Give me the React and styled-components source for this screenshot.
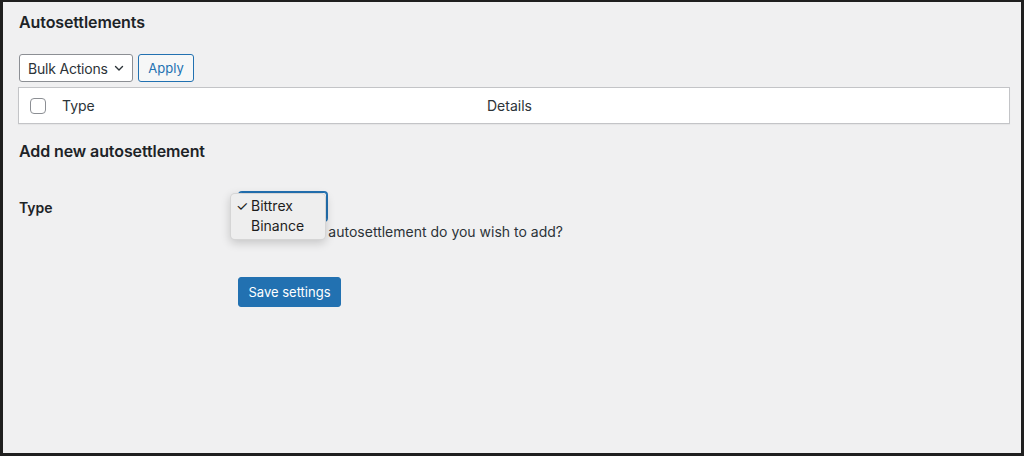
import React from "react";
import styled, { createGlobalStyle } from "styled-components";

const Global = createGlobalStyle`
  html, body { margin: 0; padding: 0; }
  body { font-family: Inter, "Liberation Sans", Arial, sans-serif; color: #1d2327; background: #f0f0f1; }
  * { box-sizing: border-box; }
`;

const Frame = styled.div`
  width: 1024px;
  height: 456px;
  border-style: solid;
  border-color: #1f1f1f;
  border-width: 2px 3px 3px 3px;
  background: #f0f0f1;
  padding: 10px 11px 0 15px;
  overflow: hidden;
`;

const Title = styled.h2`
  margin: 0 0 0 1px;
  font-size: 16px;
  font-weight: 600;
  line-height: 20px;
  color: #1d2327;
  letter-spacing: -0.1px;
`;

const TopNav = styled.div`
  display: flex;
  gap: 5px;
  margin: 22px 0 5px 1px;
`;

const BulkSelect = styled.div`
  display: flex;
  align-items: center;
  gap: 5px;
  height: 28px;
  width: 114px;
  padding: 0 0 0 8px;
  border: 1px solid #8c8f94;
  border-radius: 3px;
  background: #fff;
  font-size: 14px;
  color: #2c3338;
  letter-spacing: -0.2px;
  white-space: nowrap;
`;

const ApplyButton = styled.button`
  height: 28px;
  width: 56px;
  padding: 0;
  border: 1px solid #2271b1;
  border-radius: 3px;
  background: #f6f7f7;
  color: #2271b1;
  font-family: inherit;
  font-size: 13px;
`;

const Table = styled.div`
  display: flex;
  align-items: center;
  height: 37px;
  background: #fff;
  border: 1px solid #c3c4c7;
  box-shadow: 0 1px 1px rgba(0, 0, 0, 0.04);
  font-size: 14px;
  color: #2c3338;
`;

const CheckCell = styled.div`
  width: 43px;
  padding-left: 11px;
`;

const Checkbox = styled.span`
  width: 16px;
  height: 16px;
  border: 1px solid #8c8f94;
  border-radius: 4px;
  background: #fff;
  display: block;
`;

const HeadCell = styled.div`
  width: ${(p) => p.$w || "auto"};
  flex: ${(p) => (p.$w ? "none" : 1)};
`;

const SubTitle = styled.h2`
  margin: 17px 0 0 1px;
  font-size: 16px;
  font-weight: 600;
  line-height: 20px;
  letter-spacing: -0.1px;
`;

const FormRow = styled.div`
  display: grid;
  grid-template-columns: 220px 1fr;
  margin: 21px 0 0 1px;
`;

const Label = styled.div`
  font-size: 14px;
  font-weight: 600;
  padding-top: 17px;
`;

const Field = styled.div`
  position: relative;
  padding-top: 10px;
`;

const TypeSelect = styled.div`
  width: 88px;
  height: 29px;
  border: 1px solid #2271b1;
  box-shadow: 0 0 0 1px #2271b1;
  border-radius: 3px;
  background: #fff;
`;

const Description = styled.p`
  margin: 1px 0 0;
  font-size: 14px;
  line-height: 20px;
  color: #2c3338;
`;

const Menu = styled.ul`
  position: absolute;
  left: -9px;
  top: 11px;
  width: 96px;
  margin: 0;
  padding: 2px 0 3px;
  list-style: none;
  background: #eeeeee;
  border: 1px solid rgba(0, 0, 0, 0.1);
  border-radius: 5px;
  box-shadow: 0 3px 10px rgba(0, 0, 0, 0.18);
`;

const MenuItem = styled.li`
  position: relative;
  height: 20px;
  line-height: 19px;
  padding-left: 20px;
  font-size: 14px;
  color: #1d1d1d;
`;

const Check = styled.span`
  position: absolute;
  left: 5px;
  top: 0;
`;

const Submit = styled.div`
  margin: 35px 0 0 220px;
`;

const SaveButton = styled.button`
  height: 30px;
  width: 103px;
  padding: 0;
  border: 1px solid #2271b1;
  border-radius: 3px;
  background: #2271b1;
  color: #fff;
  font-family: inherit;
  font-size: 13px;
`;

const Chevron = () => (
  <svg width="12" height="12" viewBox="0 0 12 12" fill="none">
    <path d="M2.5 4.5 6 8 9.5 4.5" stroke="#2c3338" strokeWidth="1.4" strokeLinecap="round" strokeLinejoin="round" />
  </svg>
);

export default function App() {
  return (
    <>
      <Global />
      <Frame>
        <Title>Autosettlements</Title>
        <TopNav>
          <BulkSelect>
            Bulk Actions <Chevron />
          </BulkSelect>
          <ApplyButton>Apply</ApplyButton>
        </TopNav>
        <Table>
          <CheckCell>
            <Checkbox />
          </CheckCell>
          <HeadCell $w="425px">Type</HeadCell>
          <HeadCell>Details</HeadCell>
        </Table>
        <SubTitle>Add new autosettlement</SubTitle>
        <FormRow>
          <Label>Type</Label>
          <Field>
            <TypeSelect />
            <Description>What type of autosettlement do you wish to add?</Description>
            <Menu>
              <MenuItem>
                <Check>✓</Check>Bittrex
              </MenuItem>
              <MenuItem>Binance</MenuItem>
            </Menu>
          </Field>
        </FormRow>
        <Submit>
          <SaveButton>Save settings</SaveButton>
        </Submit>
      </Frame>
    </>
  );
}
